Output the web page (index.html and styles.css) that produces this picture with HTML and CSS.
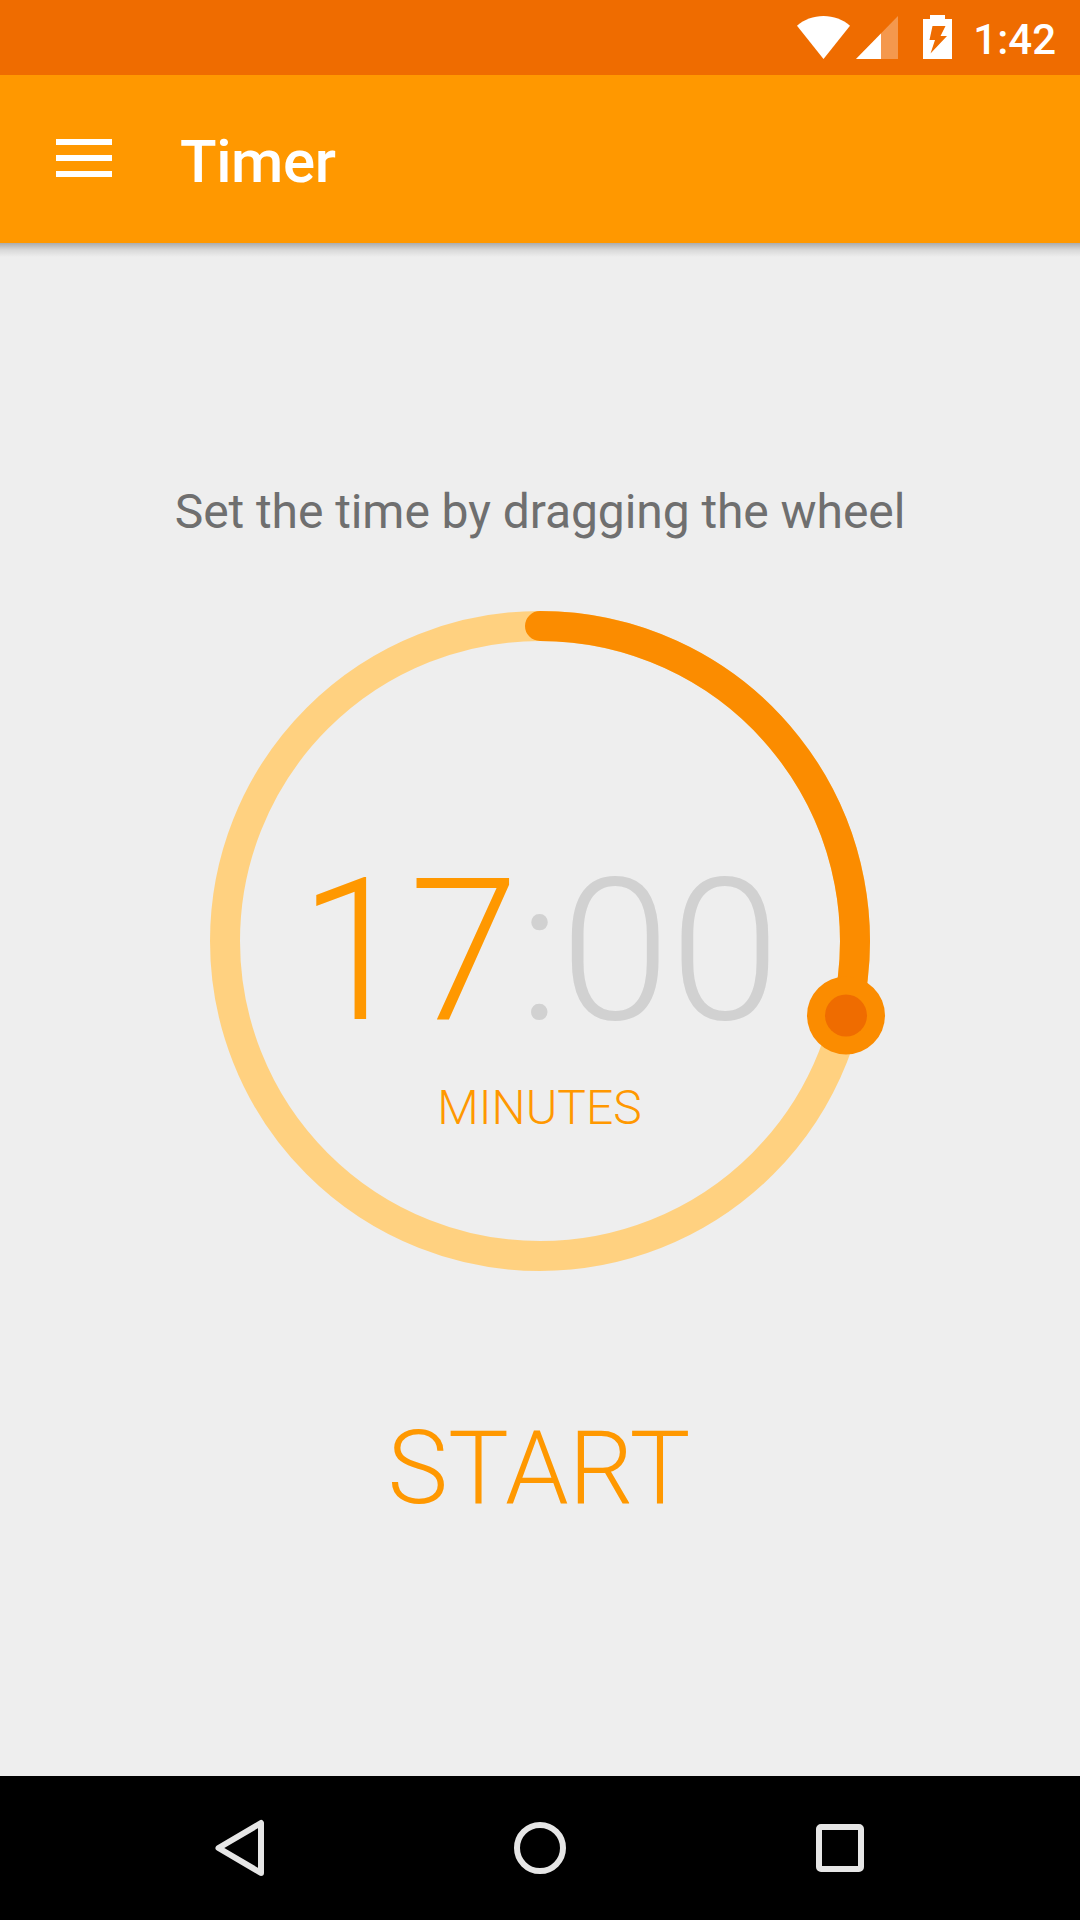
FILE: index.html
```html
<!DOCTYPE html>
<html lang="en">

<head>
  <meta charset="UTF-8">
  <title>Timer</title>
  <link rel="stylesheet" href="styles.css">
</head>

<body>
  <div class="status-bar">
    <svg class="wifi" width="53" height="43" viewBox="0 0 53 43">
      <path d="M0 9.700C7 3.500 16.500 0 26.500 0S46 3.500 53 9.700L26.500 43z" fill="#fff"/>
    </svg>
    <svg class="signal" width="42" height="43" viewBox="0 0 42 43">
      <path d="M0 43L42 0v43z" fill="#fff" fill-opacity="0.3"/>
      <path d="M0 43L25 17.400V43z" fill="#fff"/>
    </svg>
    <svg class="battery" width="29" height="44" viewBox="0 0 29 44">
      <path d="M7 0h15v4h7v40H0V4h7z" fill="#fff"/>
      <path d="M9.500 11h13L17.500 21h6.500L7.500 38.500l4.500-13.500H6.500z" fill="#ef6c00"/>
    </svg>
    <span class="clock">1:42</span>
  </div>

  <header class="app-bar">
    <button class="menu-button" aria-label="Menu">
      <span></span>
      <span></span>
      <span></span>
    </button>
    <h1>Timer</h1>
  </header>

  <main class="timer">
    <p class="hint">Set the time by dragging the wheel</p>

    <div class="wheel">
      <svg class="dial" width="660" height="660" viewBox="0 0 660 660">
        <circle class="track" cx="330" cy="330" r="315"/>
        <path class="progress" d="M330 15A315 315 0 0 1 636 404.500"/>
        <circle class="knob" cx="636" cy="404.500" r="39"/>
        <circle class="knob-center" cx="636" cy="404.500" r="21"/>
      </svg>
      <div class="readout">
        <div class="time"><span class="minutes">17</span><span class="seconds">:00</span></div>
        <div class="unit">MINUTES</div>
      </div>
    </div>

    <button class="start-button">START</button>
  </main>

  <!-- Android navigation buttons -->
  <nav class="nav-bar">
    <svg width="60" height="60" viewBox="0 0 60 60">
      <path d="M51 5v50L8.500 30z"/>
    </svg>
    <svg width="60" height="60" viewBox="0 0 60 60">
      <circle cx="30" cy="30" r="23"/>
    </svg>
    <svg width="60" height="60" viewBox="0 0 60 60">
      <rect x="9" y="9" width="42" height="42" rx="2"/>
    </svg>
  </nav>
</body>

</html>
```
FILE: styles.css
```css
:root {
  --orange: #ff9800;
  --orange-dark: #ef6c00;
  --orange-wheel: #fb8c00;
  --orange-light: #ffd180;
  --background: #eeeeee;
}

* {
  box-sizing: border-box;
}

body {
  background-color: var(--background);
  font-family: Roboto, sans-serif;
  margin: 0;
  height: 1920px;
  display: flex;
  flex-direction: column;
}

button {
  background: none;
  border: none;
  padding: 0;
  font-family: inherit;
  cursor: pointer;
}

/* Status bar */
.status-bar {
  height: 75px;
  background-color: var(--orange-dark);
  display: flex;
  justify-content: flex-end;
  align-items: flex-start;
  padding: 15px 24px 0 0;
}

.wifi,
.signal {
  margin-top: 1px;
}

.signal {
  margin-left: 6px;
}

.battery {
  margin-left: 25px;
}

.clock {
  margin-left: 21px;
  color: #fff;
  font-size: 42px;
  font-weight: 500;
  line-height: 50px;
}

/* App bar */
.app-bar {
  height: 168px;
  background-color: var(--orange);
  display: flex;
  align-items: center;
  padding-left: 56px;
}

.menu-button {
  width: 56px;
  display: flex;
  flex-direction: column;
  gap: 10px;
  margin-bottom: 2px;
}

.menu-button span {
  width: 100%;
  height: 6px;
  background-color: #fff;
}

.app-bar h1 {
  margin: 5px 0 0 68px;
  color: #fff;
  font-size: 60px;
  font-weight: 500;
  line-height: 70px;
  letter-spacing: -0.4px;
}

/* Timer */
.timer {
  flex: 1;
  display: flex;
  flex-direction: column;
  align-items: center;
  padding-top: 241px;
  /* shadow under the app bar */
  background: linear-gradient(rgba(0, 0, 0, 0.28), rgba(0, 0, 0, 0.09) 50%, rgba(0, 0, 0, 0)) top / 100% 14px no-repeat;
}

.hint {
  margin: 0;
  color: #6f6f6f;
  font-size: 48px;
  line-height: 56px;
  letter-spacing: -0.08px;
}

.wheel {
  width: 660px;
  height: 660px;
  margin-top: 71px;
  display: grid;
}

.dial,
.readout {
  grid-area: 1 / 1;
}

.dial {
  overflow: visible;
}

.track {
  fill: none;
  stroke: var(--orange-light);
  stroke-width: 30;
}

.progress {
  fill: none;
  stroke: var(--orange-wheel);
  stroke-width: 30;
  stroke-linecap: round;
}

.knob {
  fill: var(--orange-wheel);
}

.knob-center {
  fill: var(--orange-dark);
}

.readout {
  padding: 240px 1px 0 0;
  text-align: center;
  color: var(--orange);
  font-weight: 300;
}

.time {
  font-size: 198px;
  line-height: 200px;
}

.seconds {
  color: #d1d1d1;
}

.unit {
  margin-top: 29px;
  font-size: 48px;
  line-height: 56px;
}

.start-button {
  margin: 137px 2px 0 0;
  color: var(--orange);
  font-size: 102px;
  font-weight: 300;
  line-height: 120px;
}

/* Navigation bar */
.nav-bar {
  height: 144px;
  background-color: #000;
  display: flex;
  justify-content: space-around;
  align-items: center;
  padding: 0 90px;
}

.nav-bar svg {
  fill: none;
  stroke: #e6e6e6;
  stroke-width: 6;
  stroke-linejoin: round;
}
```
